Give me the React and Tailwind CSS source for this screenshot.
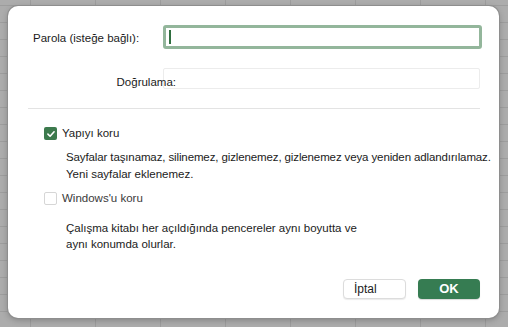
import React from 'react';

const font = { fontFamily: '"Liberation Sans", Arial, sans-serif' };

function CheckIcon() {
  return (
    <svg viewBox="0 0 12 12" className="w-[10px] h-[10px]">
      <path d="M2.3 6.2 L4.9 8.7 L9.7 3.3" fill="none" stroke="#ffffff" strokeWidth="1.9" strokeLinecap="round" strokeLinejoin="round" />
    </svg>
  );
}

export default function App() {
  return (
    <div
      className="w-[508px] h-[327px] overflow-hidden bg-[#acacac] bg-[linear-gradient(to_right,#9d9d9d_1px,transparent_1px),linear-gradient(to_bottom,#9d9d9d_1px,transparent_1px)] bg-[size:65px_17px] bg-[position:30px_5px] pl-[8px] pt-[6px] text-[11.5px] text-[#1b1b1b] whitespace-nowrap"
      style={font}
    >
      <div className="w-[491px] h-[312px] bg-white rounded-[10px] shadow-[0_0_0_1px_#8e8e8e,0_2px_6px_rgba(0,0,0,0.25)] flex flex-col">
        {/* password */}
        <div className="flex items-start mt-[19px] h-[24px]">
          <div className="w-[155px] pl-[25px] pt-[5px] leading-[17px]">Parola (isteğe bağlı):</div>
          <div className="w-[319px] h-[24px] border-[3px] border-[#93b69b] rounded-[3px] flex items-center pl-[3px]">
            <div className="w-[2px] h-[14px] bg-[#2f6e3f]" />
          </div>
        </div>

        {/* verify */}
        <div className="flex items-start mt-[19px] h-[21px]">
          <div className="w-[168px] text-right pt-[6px] leading-[17px] relative z-10">Doğrulama:</div>
          <div className="w-[317px] h-[21px] ml-[-13px] border border-[#ececec] rounded-[2px]" />
        </div>

        <div className="mt-[19px] ml-[20px] w-[452px] h-px bg-[#e3e3e3]" />

        {/* structure */}
        <div className="flex items-center mt-[18px] ml-[36px] h-[13px]">
          <div className="w-[13px] h-[13px] rounded-[2px] bg-[#3c7a4d] flex items-center justify-center">
            <CheckIcon />
          </div>
          <span className="ml-[5px] leading-[17px]">Yapıyı koru</span>
        </div>
        <div className="ml-[58px] mt-[9px] leading-[17px]">
          <div className="tracking-[-0.12px]">Sayfalar taşınamaz, silinemez, gizlenemez, gizlenemez veya yeniden adlandırılamaz.</div>
          <div>Yeni sayfalar eklenemez.</div>
        </div>

        {/* windows */}
        <div className="flex items-center mt-[9px] ml-[36px] h-[13px]">
          <div className="w-[13px] h-[13px] rounded-[2px] border border-[#d6d6d6] bg-white" />
          <span className="ml-[5px] leading-[17px] text-[#3a3a3a]">Windows'u koru</span>
        </div>
        <div className="ml-[58px] mt-[15px] leading-[16px]">
          <div>Çalışma kitabı her açıldığında pencereler aynı boyutta ve</div>
          <div>aynı konumda olurlar.</div>
        </div>

        {/* buttons */}
        <div className="flex justify-end mt-auto mb-[19px] mr-[19px] gap-[12px]">
          <button className="w-[63px] h-[20px] rounded-[4px] border border-[#dcdcdc] bg-white shadow-[0_1px_1px_rgba(0,0,0,0.08)] text-left pl-[10px] text-[12px] leading-[18px]">
            İptal
          </button>
          <button className="w-[62px] h-[20px] rounded-[4px] bg-[#367c52] text-white font-bold text-[13px] leading-[20px] shadow-[0_1px_1px_rgba(0,0,0,0.15)]">
            OK
          </button>
        </div>
      </div>
    </div>
  );
}
